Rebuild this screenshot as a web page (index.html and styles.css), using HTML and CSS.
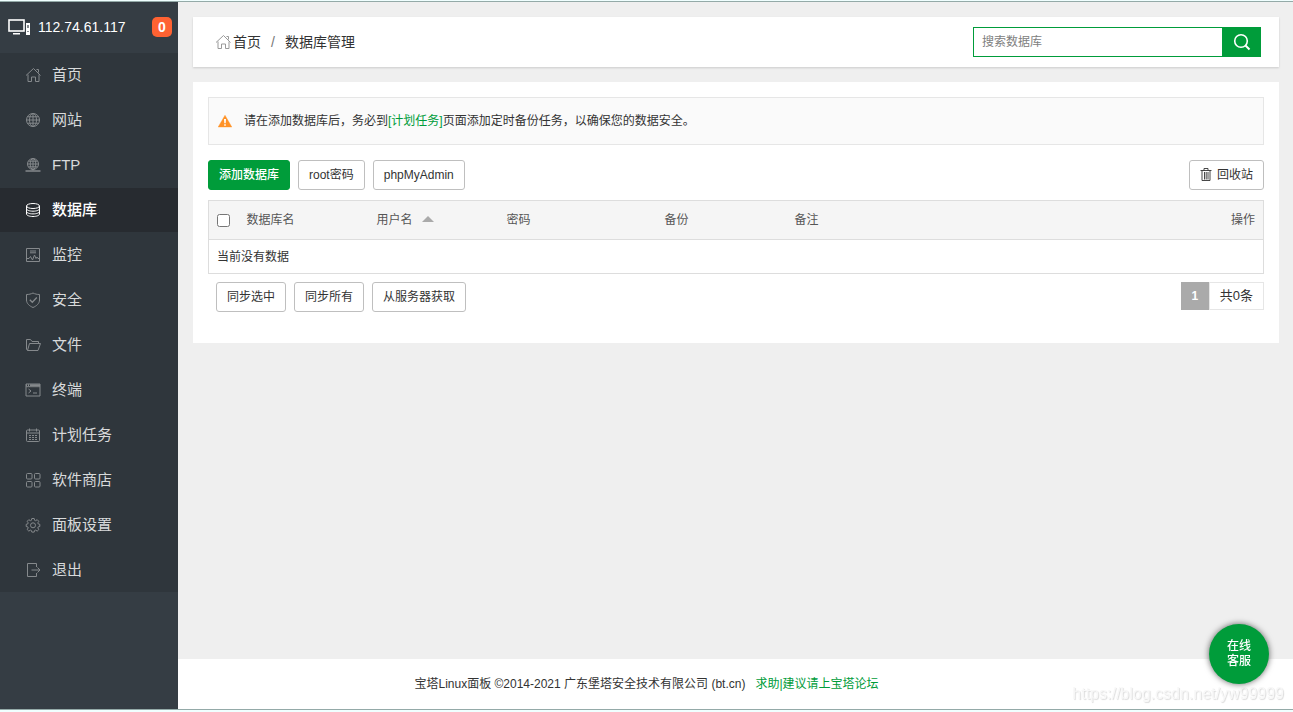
FILE: index.html
```html
<!DOCTYPE html>
<html lang="zh-CN">
<head>
<meta charset="utf-8">
<meta name="viewport" content="width=device-width, initial-scale=1">
<title>数据库管理</title>
<link rel="stylesheet" href="styles.css">
</head>
<body>
<svg class="defs" width="0" height="0" aria-hidden="true">
  <symbol id="home" viewBox="0 0 16 16"><path d="M1 8.500 8.500 1.500l7 7M3 7.500v7h3.500V10h4v4.500H14V7.500M11.500 2.500h2v3"/></symbol>
</svg>
<div class="app">
  <aside class="sidebar">
    <div class="server">
      <svg class="server-icon" width="24" height="18" viewBox="0 0 24 18" aria-hidden="true"><rect x="1" y="2" width="15" height="11" fill="none" stroke="#fff" stroke-width="1.600"/><path d="M5 15h7v1.500H5z" fill="#fff"/><path fill-rule="evenodd" d="M18 5h4v12h-4zM19.400 7v3h1.200V7zM19.400 13v1h1.200v-1z" fill="#fff"/></svg>
      <span class="ip">112.74.61.117</span>
      <a class="badge" href="#messages">0</a>
    </div>
    <nav class="menu">
      <a href="#home"><svg class="icon" viewBox="0 0 16 16"><use href="#home"/></svg>首页</a>
      <a href="#site"><svg class="icon" viewBox="0 0 16 16"><circle cx="8" cy="8" r="6.500"/><ellipse cx="8" cy="8" rx="3.500" ry="6.500"/><path d="M8 1.500v13M1.500 8h13M2.500 4.800h11M2.500 11.200h11"/></svg>网站</a>
      <a href="#ftp"><svg class="icon" viewBox="0 0 16 16"><circle cx="8" cy="7" r="5.500"/><ellipse cx="8" cy="7" rx="2.800" ry="5.500"/><path d="M8 1.500v12M2.500 7h11M3.500 4.200h9M3.500 9.800h9"/><path d="M.5 14h15M6.500 14h3" stroke-width="1.600"/></svg>FTP</a>
      <a class="active" href="#database"><svg class="icon" viewBox="0 0 16 16"><ellipse cx="8" cy="4" rx="6.500" ry="2.500"/><path d="M1.500 4v8c0 1.400 2.900 2.500 6.500 2.500s6.500-1.100 6.500-2.500V4M1.500 6.700c0 1.400 2.900 2.500 6.500 2.500s6.500-1.100 6.500-2.500M1.500 9.400c0 1.400 2.900 2.500 6.500 2.500s6.500-1.100 6.500-2.500"/></svg>数据库</a>
      <a href="#control"><svg class="icon" viewBox="0 0 16 16"><path d="M1.500 1.500h13v13h-13zM5 4h6M5 5.800h6M2 11.500h2l1.500-2 2 3.500 2-5 1.500 3.500 1-1.500 1 1.500h1.500"/></svg>监控</a>
      <a href="#firewall"><svg class="icon" viewBox="0 0 16 16"><path d="M8 1c2 1 4 1.500 6.500 1.500V8c0 3.500-3 6-6.500 7.500C4.500 14 1.500 11.500 1.500 8V2.500C4 2.500 6 2 8 1z"/><path d="M4.800 7.800l2.500 2.500 4.500-4.800" stroke-width="1.300"/></svg>安全</a>
      <a href="#files"><svg class="icon" viewBox="0 0 16 16"><path d="M2.500 13.500 1.500 12V2.500h4l1.500 2h6.500v2M2.500 13.500h10.500l2.500-7H4.500z"/></svg>文件</a>
      <a href="#terminal"><svg class="icon" viewBox="0 0 16 16"><path d="M1 2h14v12H1zM1 4.700h14M3.500 7l2.500 2-2.500 2M8 11h4"/><path d="M1 3.200h1M3 3.200h1M5 3.200h10" stroke-width="1.800"/></svg>终端</a>
      <a href="#crontab"><svg class="icon" viewBox="0 0 16 16"><rect x="1.500" y="3" width="13" height="11.500" rx="1"/><path d="M1.500 6h13M4.500 1.500v3M11.500 1.500v3"/><path d="M4 8.500h8M4 10.500h8M4 12.500h8" stroke-dasharray="2 1"/></svg>计划任务</a>
      <a href="#soft"><svg class="icon" viewBox="0 0 16 16"><rect x="1.500" y="1.500" width="5.500" height="5.500" rx="1"/><rect x="9.500" y="1.500" width="5.500" height="5.500" rx="1"/><rect x="1.500" y="9.500" width="5.500" height="5.500" rx="1"/><rect x="9.500" y="9.500" width="5.500" height="5.500" rx="1"/></svg>软件商店</a>
      <a href="#config"><svg class="icon" viewBox="0 0 16 16"><path d="M6.800 1.500h2.400l.4 1.800 1 .4 1.600-1 1.600 1.600-1 1.600.4 1 1.600.4v2.200l-1.600.4-.4 1 1 1.600-1.600 1.600-1.600-1-1 .4-.4 1.600H6.800l-.4-1.600-1-.4-1.600 1-1.600-1.600 1-1.600-.4-1-1.600-.4V7.300l1.600-.4.4-1-1-1.600 1.600-1.600 1.600 1 1-.4z"/><circle cx="8" cy="8.300" r="2.500"/></svg>面板设置</a>
      <a href="#logout"><svg class="icon" viewBox="0 0 16 16"><path d="M11.500 5V1.500H2.500v13h9V11M6.500 8H15M12.500 5.500 15 8l-2.500 2.500"/></svg>退出</a>
    </nav>
  </aside>
  <div class="page">
    <main class="content">
      <header class="topbar">
        <div class="crumbs">
          <a href="#home"><svg class="icon" viewBox="0 0 16 16" aria-hidden="true"><use href="#home"/></svg>首页</a>
          <span class="slash">/</span>
          <span>数据库管理</span>
        </div>
        <form class="search">
          <input type="text" placeholder="搜索数据库" aria-label="搜索数据库">
          <button type="button" aria-label="搜索"><svg width="18" height="18" viewBox="0 0 18 18" fill="none" stroke="#fff" stroke-width="1.600"><circle cx="8" cy="8" r="6.300"/><path d="M12.500 12.500l4 4" stroke-width="2"/></svg></button>
        </form>
      </header>
      <section class="card">
        <div class="notice">
          <svg width="14" height="13" viewBox="0 0 14 13" aria-hidden="true"><path d="M7 .3 13.800 12H.2z" fill="#ff9226" stroke="#ff9226" stroke-width=".4" stroke-linejoin="round"/><path d="M6 4h2l-.3 4.300H6.300zM6.200 9.200h1.600v1.500H6.200z" fill="#fff"/></svg>
          <p>请在添加数据库后，务必到<a href="#crontab">[计划任务]</a>页面添加定时备份任务，以确保您的数据安全。</p>
        </div>
        <div class="toolbar">
          <button class="btn primary" type="button">添加数据库</button>
          <button class="btn" type="button">root密码</button>
          <button class="btn" type="button">phpMyAdmin</button>
          <button class="btn recycle" type="button"><svg width="12" height="14" viewBox="0 0 12 14" fill="none" stroke="#333" aria-hidden="true"><path d="M.5 2.500h11M4 2.500v-2h4v2M2 2.500v10h8v-10M4.500 4v7.500M6.200 4v7.500M8 4v7.500" stroke-width=".9"/></svg>回收站</button>
        </div>
        <table class="list">
          <thead>
            <tr>
              <th class="col-check"><input type="checkbox" aria-label="全选"></th>
              <th class="col">数据库名</th>
              <th class="col">用户名<span class="sort"></span></th>
              <th class="col-wide">密码</th>
              <th class="col">备份</th>
              <th>备注</th>
              <th class="col-action">操作</th>
            </tr>
          </thead>
          <tbody><tr><td colspan="7">当前没有数据</td></tr></tbody>
        </table>
        <div class="table-foot">
          <button class="btn" type="button">同步选中</button>
          <button class="btn" type="button">同步所有</button>
          <button class="btn" type="button">从服务器获取</button>
          <div class="pager"><span class="current">1</span><span class="total">共0条</span></div>
        </div>
      </section>
    </main>
    <footer class="footer">
      <span>宝塔Linux面板 ©2014-2021 广东堡塔安全技术有限公司 (bt.cn)</span>
      <a href="#forum">求助|建议请上宝塔论坛</a>
    </footer>
  </div>
</div>
<span class="watermark">https://blog.csdn.net/yw99999</span>
<button class="service" type="button">在线<br>客服</button>
</body>
</html>
```
FILE: styles.css
```css
* {
  box-sizing: border-box;
}

body {
  margin: 0;
  padding: 1px 0 2px;
  min-height: 100vh;
  display: flex;
  background: #f0ffff;
  color: #333;
  font: 12px/20px "Liberation Sans", "Noto Sans CJK SC", sans-serif;
}

a {
  color: inherit;
  text-decoration: none;
}

button,
input {
  font: inherit;
  color: inherit;
}

.defs {
  position: absolute;
}

.app {
  flex: 1;
  display: flex;
  border: solid #94aaa8;
  border-width: 1px 0;
  background: #efefef;
}

.icon {
  width: 16px;
  height: 16px;
  flex: none;
  fill: none;
  stroke: #85898c;
  stroke-width: 1;
}

/* Sidebar */
.sidebar {
  flex: none;
  width: 178px;
  background: #353d44;
}

.server {
  height: 51px;
  padding: 0 6px 2px 8px;
  display: flex;
  align-items: center;
  gap: 6px;
  color: #fff;
  font-size: 14px;
}

.badge {
  width: 20px;
  height: 20px;
  margin-left: auto;
  border-radius: 5px;
  background: #ff6232;
  font-weight: bold;
  text-align: center;
}

.menu {
  display: flex;
  flex-direction: column;
  gap: 1px;
  background: #2f363c;
}

.menu a {
  height: 44px;
  padding-left: 25px;
  display: flex;
  align-items: center;
  gap: 11px;
  color: #d8dadb;
  font-size: 15px;
}

.menu .active {
  background: #272b30;
  color: #fff;
  font-weight: 500;
}

.active .icon {
  stroke: #fff;
}

/* Content */
.page {
  flex: 1;
  min-width: 0;
  display: flex;
  flex-direction: column;
}

.content {
  flex: 1;
  padding: 15px 14px 15px 15px;
}

.topbar {
  height: 50px;
  padding: 0 18px 0 22px;
  display: flex;
  align-items: center;
  justify-content: space-between;
  background: #fff;
  box-shadow: 0 1px 2px rgba(0, 0, 0, 0.15);
}

.crumbs,
.crumbs a {
  display: flex;
  align-items: center;
  font-size: 14px;
}

.crumbs {
  gap: 10px;
}

.crumbs a {
  gap: 2px;
}

.crumbs .icon {
  stroke: #999;
}

.crumbs .slash {
  color: #777;
}

.search {
  display: flex;
}

.search input {
  width: 250px;
  height: 30px;
  padding: 0 8px;
  border: 1px solid #009c3a;
  border-radius: 0;
  outline: none;
}

.search input::placeholder {
  color: #808080;
}

.search button {
  width: 38px;
  padding: 0;
  border: 0;
  display: grid;
  place-items: center;
  background: #009c3a;
}

.card {
  margin-top: 15px;
  padding: 15px 15px 31px;
  background: #fff;
}

.notice {
  height: 48px;
  padding: 0 9px;
  display: flex;
  align-items: center;
  gap: 12px;
  border: 1px solid #e6e6e6;
  background: #fafafa;
}

.notice p {
  margin: 0;
}

.notice a {
  color: #009c3a;
}

.toolbar,
.table-foot {
  display: flex;
  gap: 8px;
}

.toolbar {
  margin: 15px 0 10px;
}

.btn {
  height: 30px;
  padding: 0 10px;
  border: 1px solid #bfbfbf;
  border-radius: 3px;
  background: #fff;
  line-height: 20px;
}

.primary {
  border-color: #009c3a;
  background: #009c3a;
  color: #fff;
  font-weight: 500;
}

.recycle {
  margin-left: auto;
  display: flex;
  align-items: center;
  gap: 5px;
}

.list {
  width: 100%;
  border: 1px solid #ddd;
  border-collapse: collapse;
  table-layout: fixed;
}

.list th,
.list td {
  padding: 0 8px;
  border-bottom: 1px solid #ddd;
  text-align: left;
  font-weight: normal;
}

.list th {
  height: 39px;
  background: #f5f5f5;
  color: #555;
}

.list td {
  height: 34px;
}

.list input {
  width: 13px;
  height: 13px;
  margin: 0;
  display: block;
}

.col-check {
  width: 30px;
}

.col {
  width: 130px;
}

.col-wide {
  width: 158px;
}

.list .col-action {
  text-align: right;
}

.sort {
  display: inline-block;
  margin-left: 9px;
  border: solid transparent;
  border-width: 0 6px 6px;
  border-bottom-color: #aaa;
  vertical-align: 2px;
}

.table-foot {
  padding: 8px 0 0 8px;
}

.pager {
  margin-left: auto;
  height: 28px;
  display: flex;
  line-height: 28px;
}

.current {
  width: 28px;
  background: #aaa;
  color: #fff;
  font-weight: bold;
  text-align: center;
}

.total {
  padding: 0 10px;
  border: 1px solid #e6e6e6;
  font-size: 13px;
  line-height: 26px;
}

/* Centred on the window, so the sidebar's width is taken off the right */
.footer {
  height: 50px;
  padding-right: 178px;
  display: flex;
  align-items: center;
  justify-content: center;
  gap: 10px;
  background: #fff;
}

.footer a {
  color: #009c3a;
}

.service {
  position: fixed;
  right: 24px;
  bottom: 28px;
  width: 60px;
  height: 60px;
  padding: 0;
  border: 0;
  border-radius: 50%;
  background: #009c3a;
  box-shadow: 0 0 6px rgba(0, 0, 0, 0.6);
  color: #fff;
  font-weight: 500;
  line-height: 15px;
}

.watermark {
  position: fixed;
  right: 9px;
  bottom: 8px;
  color: #f8f8f8;
  font-size: 16px;
  text-shadow: 1px 1px 1px #dcdcdc;
}
```
